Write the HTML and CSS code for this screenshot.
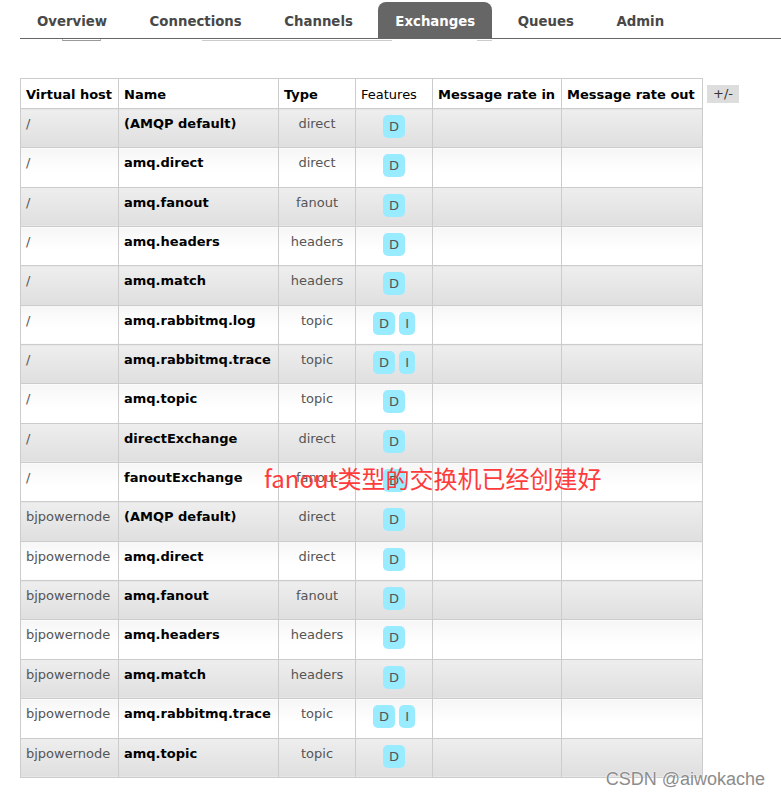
FILE: index.html
```html
<!DOCTYPE html>
<html>
<head>
<meta charset="utf-8">
<link rel="stylesheet" href="styles.css">
</head>
<body>
<div class="page">
  <nav class="tabs">
    <a class="tab">Overview</a>
    <a class="tab">Connections</a>
    <a class="tab">Channels</a>
    <a class="tab active">Exchanges</a>
    <a class="tab">Queues</a>
    <a class="tab">Admin</a>
  </nav>
  <div class="subline"><span class="s1"></span><span class="s2"></span><span class="s3"></span></div>
  <div class="content">
    <table class="list">
      <colgroup>
        <col class="c-vh"><col class="c-name"><col class="c-type"><col class="c-feat"><col class="c-in"><col class="c-out">
      </colgroup>
      <thead>
        <tr><th>Virtual host</th><th>Name</th><th>Type</th><th class="plain">Features</th><th>Message rate in</th><th>Message rate out</th></tr>
      </thead>
      <tbody>
        <tr class="alt1"><td class="vh">/</td><td class="nm">(AMQP default)</td><td class="ty">direct</td><td class="ft"><span class="f">D</span></td><td></td><td></td></tr>
        <tr class="alt2"><td class="vh">/</td><td class="nm">amq.direct</td><td class="ty">direct</td><td class="ft"><span class="f">D</span></td><td></td><td></td></tr>
        <tr class="alt1"><td class="vh">/</td><td class="nm">amq.fanout</td><td class="ty">fanout</td><td class="ft"><span class="f">D</span></td><td></td><td></td></tr>
        <tr class="alt2"><td class="vh">/</td><td class="nm">amq.headers</td><td class="ty">headers</td><td class="ft"><span class="f">D</span></td><td></td><td></td></tr>
        <tr class="alt1"><td class="vh">/</td><td class="nm">amq.match</td><td class="ty">headers</td><td class="ft"><span class="f">D</span></td><td></td><td></td></tr>
        <tr class="alt2"><td class="vh">/</td><td class="nm">amq.rabbitmq.log</td><td class="ty">topic</td><td class="ft"><span class="f">D</span> <span class="f">I</span></td><td></td><td></td></tr>
        <tr class="alt1"><td class="vh">/</td><td class="nm">amq.rabbitmq.trace</td><td class="ty">topic</td><td class="ft"><span class="f">D</span> <span class="f">I</span></td><td></td><td></td></tr>
        <tr class="alt2"><td class="vh">/</td><td class="nm">amq.topic</td><td class="ty">topic</td><td class="ft"><span class="f">D</span></td><td></td><td></td></tr>
        <tr class="alt1"><td class="vh">/</td><td class="nm">directExchange</td><td class="ty">direct</td><td class="ft"><span class="f">D</span></td><td></td><td></td></tr>
        <tr class="alt2"><td class="vh">/</td><td class="nm">fanoutExchange</td><td class="ty">fanout</td><td class="ft"><span class="f">D</span></td><td></td><td></td></tr>
        <tr class="alt1"><td class="vh">bjpowernode</td><td class="nm">(AMQP default)</td><td class="ty">direct</td><td class="ft"><span class="f">D</span></td><td></td><td></td></tr>
        <tr class="alt2"><td class="vh">bjpowernode</td><td class="nm">amq.direct</td><td class="ty">direct</td><td class="ft"><span class="f">D</span></td><td></td><td></td></tr>
        <tr class="alt1"><td class="vh">bjpowernode</td><td class="nm">amq.fanout</td><td class="ty">fanout</td><td class="ft"><span class="f">D</span></td><td></td><td></td></tr>
        <tr class="alt2"><td class="vh">bjpowernode</td><td class="nm">amq.headers</td><td class="ty">headers</td><td class="ft"><span class="f">D</span></td><td></td><td></td></tr>
        <tr class="alt1"><td class="vh">bjpowernode</td><td class="nm">amq.match</td><td class="ty">headers</td><td class="ft"><span class="f">D</span></td><td></td><td></td></tr>
        <tr class="alt2"><td class="vh">bjpowernode</td><td class="nm">amq.rabbitmq.trace</td><td class="ty">topic</td><td class="ft"><span class="f">D</span> <span class="f">I</span></td><td></td><td></td></tr>
        <tr class="alt1"><td class="vh">bjpowernode</td><td class="nm">amq.topic</td><td class="ty">topic</td><td class="ft"><span class="f">D</span></td><td></td><td></td></tr>
      </tbody>
    </table>
    <span class="toggle">+/-</span>
  </div>
  <div class="note">fanout类型的交换机已经创建好</div>
  <div class="watermark">CSDN @aiwokache</div>
</div>
</body>
</html>
```

FILE: styles.css
```css
html, body {
  margin: 0;
  background: #fff;
}
body {
  font-family: "DejaVu Sans", Verdana, sans-serif;
  font-size: 13px;
  color: #000;
}
.page {
  position: relative;
  width: 781px;
  height: 797px;
  overflow: hidden;
}
.tabs {
  display: flex;
  gap: 8.5px;
  margin: 2px 0 0 20px;
  height: 36px;
  border-bottom: 1px solid #666;
}
.tab {
  display: block;
  padding: 3px 17px 0;
  line-height: 33px;
  font-size: 13.3px;
  font-weight: bold;
  color: #484848;
}
.tab.active {
  background: #666;
  color: #fff;
  border-radius: 8px 8px 0 0;
}
.subline {
  display: flex;
  height: 2px;
}
.subline span {
  display: block;
  height: 1px;
  border-bottom: 1px solid #bbb;
}
.subline .s1 {
  margin-left: 62px;
  width: 37px;
  border-left: 1px solid #bbb;
  border-right: 1px solid #bbb;
  border-bottom-color: #999;
}
.subline .s2 {
  margin-left: 101px;
  width: 190px;
  border-bottom-color: #ccc;
}
.subline .s3 {
  margin-left: 85px;
  width: 15px;
  border-bottom-color: #ccc;
}
.content {
  display: flex;
  align-items: flex-start;
  margin: 37px 0 0 20px;
}
table.list {
  border-collapse: collapse;
  table-layout: fixed;
  width: 682px;
}
.c-vh { width: 98px; }
.c-name { width: 160px; }
.c-type { width: 77px; }
.c-feat { width: 77px; }
.c-in { width: 129px; }
.c-out { width: 141px; }
table.list th,
table.list td {
  border: 1px solid #ccc;
  padding: 0 5px;
  text-align: left;
  vertical-align: top;
  line-height: 15px;
  white-space: nowrap;
}
table.list thead tr {
  height: 30px;
}
table.list th {
  padding-top: 8px;
  font-weight: bold;
  background: #fff;
}
table.list th.plain {
  font-weight: normal;
}
table.list tbody tr {
  height: 39.35px;
}
table.list td {
  padding-top: 7px;
}
tr.alt1 td {
  background: linear-gradient(#eeeeee, #dfdfdf);
}
tr.alt2 td {
  background: linear-gradient(#f6f6f6, #ffffff 60%);
}
table.list td.vh {
  color: #555;
}
table.list td.nm {
  font-weight: bold;
}
table.list td.ty {
  text-align: center;
  color: #555;
}
table.list td.ft {
  text-align: center;
  padding-top: 6px;
}
.f {
  display: inline-block;
  vertical-align: top;
  padding: 4px 6px;
  background: #99ebff;
  color: #555;
  border-radius: 5px;
  line-height: 15px;
}
.toggle {
  margin: 7px 0 0 4px;
  padding: 0 6px;
  line-height: 18px;
  background: #dddddd;
  color: #333;
}
.note {
  position: absolute;
  left: 264px;
  top: 466px;
  font-family: "Noto Sans CJK SC", sans-serif;
  font-size: 24px;
  line-height: 24px;
  color: #ff3b3b;
  white-space: nowrap;
}
.watermark {
  position: absolute;
  right: 16px;
  top: 769px;
  font-family: "Liberation Sans", Arial, sans-serif;
  font-size: 18px;
  line-height: 20px;
  color: #8c8c8c;
  text-shadow: 0 0 2px #fff, 0 0 1px #fff;
  white-space: nowrap;
}
```
